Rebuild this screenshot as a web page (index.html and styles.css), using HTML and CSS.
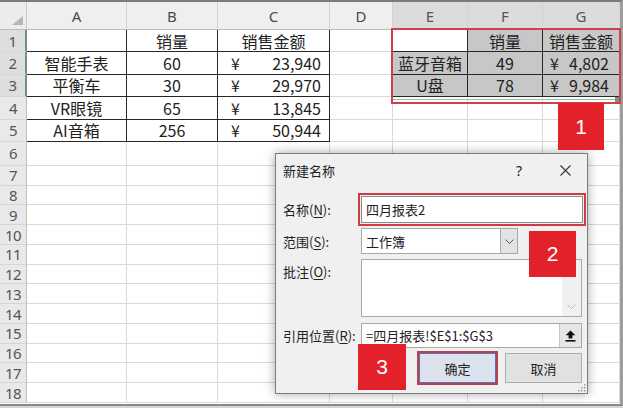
FILE: index.html
```html
<!DOCTYPE html>
<html lang="zh">
<head>
<meta charset="utf-8">
<title>新建名称</title>
<link rel="stylesheet" href="styles.css">
</head>
<body>
<div class="sheet">
  <div class="grid">
    <div class="corner"><svg width="11" height="9" viewBox="0 0 11 9"><path d="M11 0V9H0Z" fill="#b5b5b5"/></svg></div>
    <div class="ch">A</div><div class="ch">B</div><div class="ch">C</div><div class="ch">D</div>
    <div class="ch sel">E</div><div class="ch sel">F</div><div class="ch sel">G</div>

    <div class="rh sel">1</div>
    <div class="c bb br"></div><div class="c bb br">销量</div><div class="c bb br">销售金额</div><div class="c"></div>
    <div class="c bb br"></div><div class="c g bb br">销量</div><div class="c g bb br">销售金额</div>

    <div class="rh sel">2</div>
    <div class="c bb br">智能手表</div><div class="c bb br">60</div><div class="c bb br money"><span>¥</span><span>23,940</span></div><div class="c"></div>
    <div class="c g bb br">蓝牙音箱</div><div class="c g bb br">49</div><div class="c g bb br money2"><span>¥</span><span>4,802</span></div>

    <div class="rh sel">3</div>
    <div class="c bb br">平衡车</div><div class="c bb br">30</div><div class="c bb br money"><span>¥</span><span>29,970</span></div><div class="c"></div>
    <div class="c g bb br">U盘</div><div class="c g bb br">78</div><div class="c g bb br money2"><span>¥</span><span>9,984</span></div>

    <div class="rh">4</div>
    <div class="c bb br">VR眼镜</div><div class="c bb br">65</div><div class="c bb br money"><span>¥</span><span>13,845</span></div><div class="c"></div>
    <div class="c"></div><div class="c"></div><div class="c"></div>

    <div class="rh">5</div>
    <div class="c bb br">AI音箱</div><div class="c bb br">256</div><div class="c bb br money"><span>¥</span><span>50,944</span></div><div class="c"></div>
    <div class="c"></div><div class="c"></div><div class="c"></div>

    <div class="rh">6</div><div class="c"></div><div class="c"></div><div class="c"></div><div class="c"></div><div class="c"></div><div class="c"></div><div class="c"></div>
    <div class="rh">7</div><div class="c"></div><div class="c"></div><div class="c"></div><div class="c"></div><div class="c"></div><div class="c"></div><div class="c"></div>
    <div class="rh">8</div><div class="c"></div><div class="c"></div><div class="c"></div><div class="c"></div><div class="c"></div><div class="c"></div><div class="c"></div>
    <div class="rh">9</div><div class="c"></div><div class="c"></div><div class="c"></div><div class="c"></div><div class="c"></div><div class="c"></div><div class="c"></div>
    <div class="rh">10</div><div class="c"></div><div class="c"></div><div class="c"></div><div class="c"></div><div class="c"></div><div class="c"></div><div class="c"></div>
    <div class="rh">11</div><div class="c"></div><div class="c"></div><div class="c"></div><div class="c"></div><div class="c"></div><div class="c"></div><div class="c"></div>
    <div class="rh">12</div><div class="c"></div><div class="c"></div><div class="c"></div><div class="c"></div><div class="c"></div><div class="c"></div><div class="c"></div>
    <div class="rh">13</div><div class="c"></div><div class="c"></div><div class="c"></div><div class="c"></div><div class="c"></div><div class="c"></div><div class="c"></div>
    <div class="rh">14</div><div class="c"></div><div class="c"></div><div class="c"></div><div class="c"></div><div class="c"></div><div class="c"></div><div class="c"></div>
    <div class="rh">15</div><div class="c"></div><div class="c"></div><div class="c"></div><div class="c"></div><div class="c"></div><div class="c"></div><div class="c"></div>
    <div class="rh">16</div><div class="c"></div><div class="c"></div><div class="c"></div><div class="c"></div><div class="c"></div><div class="c"></div><div class="c"></div>
    <div class="rh">17</div><div class="c"></div><div class="c"></div><div class="c"></div><div class="c"></div><div class="c"></div><div class="c"></div><div class="c"></div>
    <div class="rh">18</div><div class="c"></div><div class="c"></div><div class="c"></div><div class="c"></div><div class="c"></div><div class="c"></div><div class="c"></div>
  </div>

  <div class="sel-line"></div>
  <div class="sel-handle"></div>
  <div class="hl-box"></div>

  <div class="dialog">
    <div class="titlebar">
      <span class="title">新建名称</span>
      <span class="help">?</span>
      <svg class="close" width="11" height="11" viewBox="0 0 11 11"><path d="M0.5 0.5L10.5 10.5M10.5 0.5L0.5 10.5" stroke="#333" stroke-width="1.1" fill="none"/></svg>
    </div>
    <div class="row row-name">
      <span class="label">名称(<u>N</u>):</span>
      <div class="field name-field">四月报表2</div>
    </div>
    <div class="row row-scope">
      <span class="label">范围(<u>S</u>):</span>
      <div class="field select-field">
        <span class="sel-text">工作簿</span>
        <span class="drop"><svg width="9" height="5" viewBox="0 0 9 5"><path d="M0.5 0.5L4.5 4.5L8.5 0.5" fill="none" stroke="#555"/></svg></span>
      </div>
    </div>
    <div class="row row-comment">
      <span class="label">批注(<u>O</u>):</span>
      <div class="field comment-field">
        <span class="scroll"><svg width="9" height="5" viewBox="0 0 9 5"><path d="M0.5 0.5L4.5 4.5L8.5 0.5" fill="none" stroke="#bdbdbd"/></svg></span>
      </div>
    </div>
    <div class="row row-ref">
      <span class="label">引用位置(<u>R</u>):</span>
      <div class="field ref-field">
        <span class="ref-text">=四月报表!$E$1:$G$3</span>
        <span class="collapse"><svg width="11" height="12" viewBox="0 0 11 12"><path d="M5.5 0.5L10.3 5.3H7.4V8.4H3.6V5.3H0.7Z" fill="#111"/><rect x="0.5" y="10" width="10" height="1.6" fill="#111"/></svg></span>
      </div>
    </div>
    <div class="buttons">
      <div class="btn ok">确定</div>
      <div class="btn cancel">取消</div>
    </div>
    <svg class="grip" width="10" height="10" viewBox="0 0 10 10"><g fill="#9a9a9a"><rect x="8" y="2" width="1.5" height="1.5"/><rect x="5" y="5" width="1.5" height="1.5"/><rect x="8" y="5" width="1.5" height="1.5"/><rect x="2" y="8" width="1.5" height="1.5"/><rect x="5" y="8" width="1.5" height="1.5"/><rect x="8" y="8" width="1.5" height="1.5"/></g></svg>
  </div>

  <div class="badge b1">1</div>
  <div class="badge b2">2</div>
  <div class="badge b3">3</div>
</div>
</body>
</html>
```
FILE: styles.css
```css
* { box-sizing: border-box; }
html, body { margin: 0; padding: 0; }
body {
  width: 623px;
  height: 408px;
  overflow: hidden;
  background: #d6d6d6;
  font-family: "Noto Sans CJK SC", "Noto Sans", sans-serif;
  color: #222;
}
.sheet {
  position: relative;
  width: 623px;
  height: 406px;
  background: #fff;
  border-top: 2px solid #7b7b7b;
  border-right: 3px solid #9d9d9d;
  border-bottom: 2px solid #8a8a8a;
}
.grid {
  display: grid;
  grid-template-columns: 27px 100px 91px 112px 63px 75px 75px 77px;
  grid-template-rows: 28px repeat(5, 22.4px) 24px repeat(12, 19.75px);
}
.corner {
  background: #ececec;
  border-right: 1px solid #c8c8c8;
  border-bottom: 1px solid #bdbdbd;
  display: flex;
  align-items: flex-end;
  justify-content: flex-end;
  padding: 0 3px 4px 0;
}
.ch {
  background: #efefef;
  color: #4a4a4a;
  font-family: "Noto Sans", sans-serif;
  font-size: 15px;
  display: flex;
  align-items: center;
  justify-content: center;
  border-right: 1px solid #d2d2d2;
  border-bottom: 1px solid #bdbdbd;
}
.ch.sel { background: #dcdcdc; color: #555; }
.rh {
  background: #e9e9e9;
  color: #555;
  font-family: "Noto Sans", sans-serif;
  font-size: 15px;
  display: flex;
  align-items: center;
  justify-content: center;
  border-right: 1px solid #bdbdbd;
  border-bottom: 1px solid #d6d6d6;
  letter-spacing: -0.5px;
}
.rh.sel { background: #dedede; border-right: 2px solid #6f957b; }
.c {
  display: flex;
  align-items: center;
  justify-content: center;
  font-size: 16px;
  color: #222;
  border-right: 1px solid #d9d9d9;
  border-bottom: 1px solid #d9d9d9;
  white-space: nowrap;
}
.c.bb { border-bottom-color: #262626; }
.c.br { border-right-color: #262626; }
.c.g { background: #c7c7c7; }
.money { justify-content: space-between; padding: 0 8px 0 13px; }
.money2 { justify-content: space-between; padding: 0 10px 0 7px; }

.sel-line {
  position: absolute;
  left: 393px;
  top: 97px;
  width: 227px;
  height: 1px;
  background: #9cc8a8;
}
.sel-handle {
  position: absolute;
  left: 615px;
  top: 95px;
  width: 5px;
  height: 5px;
  background: #6f957b;
}
.hl-box {
  position: absolute;
  left: 391px;
  top: 26px;
  width: 230px;
  height: 76px;
  border: 2px solid #cc414a;
}

.dialog {
  position: absolute;
  left: 275px;
  top: 151px;
  width: 313px;
  height: 241px;
  background: #f0f0f0;
  border: 1px solid #7d7d7d;
  box-shadow: 0 0 10px rgba(0, 0, 0, 0.35);
  font-size: 13px;
  color: #222;
}
.titlebar {
  height: 32px;
  display: flex;
  align-items: center;
  padding-left: 7px;
}
.title { flex: 1; font-size: 13px; }
.help { width: 20px; text-align: center; font-family: "Noto Sans", sans-serif; font-size: 14px; margin-right: 31px; }
.close { margin-right: 16px; }

.row { display: flex; padding: 0 4px 0 7px; }
.label { width: 78px; flex: none; white-space: nowrap; font-size: 13px; }
.label u { text-underline-offset: 2px; }
.field { flex: 1; background: #fff; border: 1px solid #a9a9a9; }

.row-name { margin-top: 10px; align-items: center; }
.name-field {
  height: 27px;
  display: flex;
  align-items: center;
  padding-left: 4px;
  border-color: #8a8a8a;
  outline: 2px solid #cf3c45;
  outline-offset: 1px;
}
.row-scope { margin-top: 5px; align-items: center; padding-right: 69px; }
.select-field { height: 26px; display: flex; align-items: center; padding-left: 4px; }
.sel-text { flex: 1; }
.drop {
  width: 17px;
  height: 24px;
  background: #e3e3e3;
  border-left: 1px solid #adadad;
  display: flex;
  align-items: center;
  justify-content: center;
}
.row-comment { margin-top: 5px; padding-right: 5px; }
.row-comment .label { padding-top: 3px; }
.comment-field { height: 58px; display: flex; justify-content: flex-end; }
.scroll {
  width: 19px;
  background: #f0f0f0;
  display: flex;
  align-items: flex-end;
  justify-content: center;
  padding-bottom: 7px;
}
.row-ref { margin-top: 6px; align-items: center; padding-right: 5px; }
.ref-field { height: 25px; display: flex; align-items: center; padding-left: 4px; }
.ref-text { flex: 1; }
.collapse {
  width: 22px;
  height: 23px;
  background: #e6e6e6;
  border-left: 1px solid #c4c4c4;
  display: flex;
  align-items: center;
  justify-content: center;
}
.buttons {
  display: flex;
  justify-content: flex-end;
  gap: 9px;
  margin-top: 5px;
  padding-right: 5px;
}
.btn {
  width: 77px;
  height: 30px;
  display: flex;
  align-items: center;
  justify-content: center;
  font-size: 13px;
  border: 1px solid #adadad;
  background: #e1e1e1;
}
.btn.ok {
  background: #dce3ed;
  border-color: #5a6fb8;
  outline: 2px solid #b8404f;
  outline-offset: 0;
}
.grip { position: absolute; right: 1px; bottom: 1px; }

.badge {
  position: absolute;
  background: #e3212b;
  color: #fff;
  font-family: "Liberation Sans", sans-serif;
  font-size: 21px;
  display: flex;
  align-items: center;
  justify-content: center;
}
.b1 { left: 558px; top: 101px; width: 46px; height: 47px; }
.b2 { left: 529px; top: 229px; width: 47px; height: 46px; }
.b3 { left: 358px; top: 342px; width: 48px; height: 46px; }
```
